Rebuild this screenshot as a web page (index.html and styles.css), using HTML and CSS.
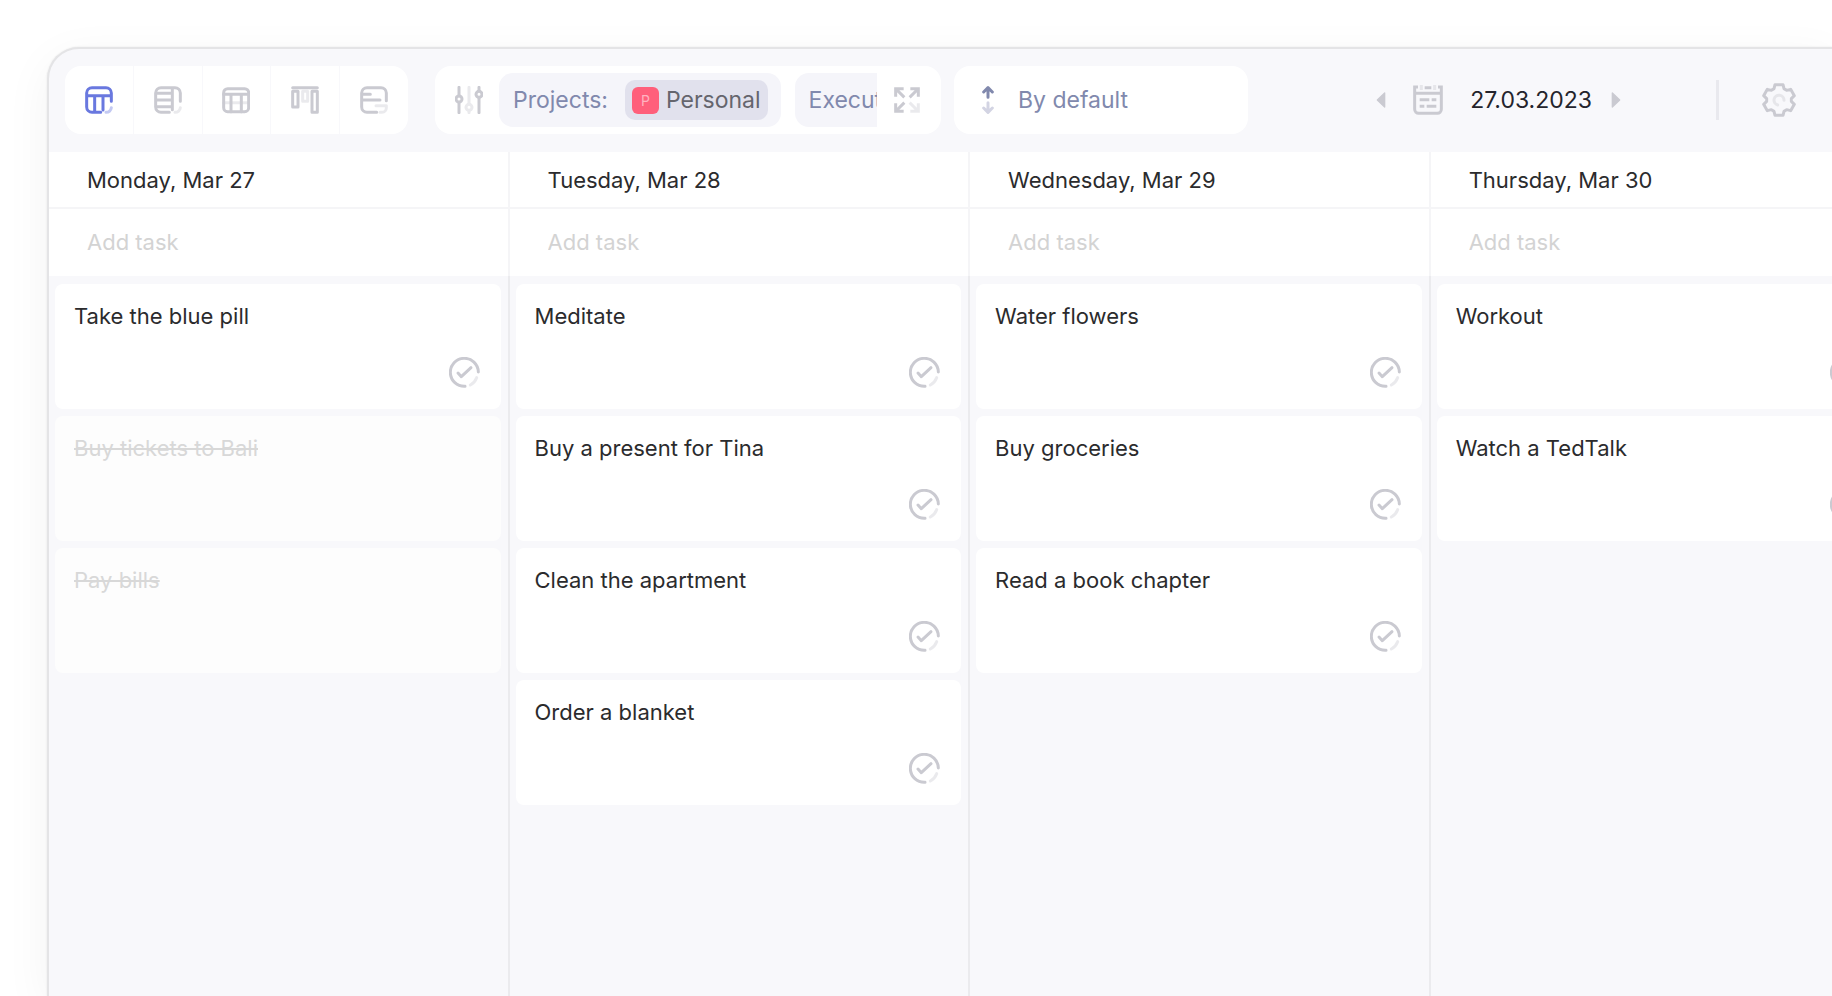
FILE: index.html
```html
<!DOCTYPE html>
<html lang="en">
<head>
  <meta charset="UTF-8" />
  <meta name="viewport" content="width=device-width, initial-scale=1.0">
  <title>Week planner</title>
  <link rel="stylesheet" href="styles.css">
</head>
<body>
  <!-- shared icons -->
  <svg class="sprite" aria-hidden="true">
    <symbol id="check" viewBox="0 0 93 93">
      <path d="M48 88A42 42 0 1 1 88 45"/>
      <path class="faint" d="M83 62A42 42 0 0 1 64 84"/>
      <path d="M27 48L37 59L66 32"/>
    </symbol>
  </svg>

  <main class="app">
    <header class="toolbar">
      <nav class="views">
        <button class="view active" aria-label="Week">
          <svg width="28" height="28" viewBox="0 0 84 84">
            <path d="M47 79H21A16 16 0 0 1 5 63V21A16 16 0 0 1 21 5H63A16 16 0 0 1 79 21V46M5 29H79M29 29V79M54 29V72"/>
            <path class="faint" d="M63 79A17 17 0 0 0 79 65"/>
          </svg>
        </button>
        <button class="view" aria-label="List">
          <svg width="28" height="28" viewBox="0 0 84 84">
            <path d="M46 79H21A16 16 0 0 1 5 63V21A16 16 0 0 1 21 5H63A16 16 0 0 1 79 21V46M55 5V71M5 22H55M5 42H55M5 62H55"/>
            <path class="faint" d="M63 79A17 17 0 0 0 79 65"/>
          </svg>
        </button>
        <button class="view" aria-label="Table">
          <svg width="28" height="28" viewBox="0 0 84 84">
            <path class="faint" d="M5 50H79"/>
            <rect x="5" y="8" width="75" height="69" rx="12"/>
            <path d="M5 25H80M27 25V77M58 25V77"/>
          </svg>
        </button>
        <button class="view" aria-label="Board">
          <svg width="28" height="28" viewBox="0 0 84 84">
            <path d="M5 5H79M5 16H21V63H5ZM63 16H79V79H63Z"/>
            <path class="faint" d="M35 16H50V46H35Z"/>
          </svg>
        </button>
        <button class="view" aria-label="Timeline">
          <svg width="28" height="28" viewBox="0 0 84 84">
            <path d="M50 79H21A16 16 0 0 1 5 63V21A16 16 0 0 1 21 5H63A16 16 0 0 1 79 21V44M5 25H31M5 42H60"/>
            <path class="faint" d="M48 59H79V66A13 13 0 0 1 66 79H60"/>
          </svg>
        </button>
      </nav>

      <section class="filters">
        <button class="icon-btn" aria-label="Filters">
          <svg width="28" height="28" viewBox="0 0 84 84">
            <path d="M12 4V28M12 50V80M72 4V14M72 36V80"/>
            <circle cx="12" cy="39" r="9"/>
            <circle cx="72" cy="25" r="9"/>
            <g class="faint"><path d="M42 4V53M42 75V80"/><circle cx="42" cy="64" r="9"/></g>
          </svg>
        </button>
        <div class="chips">
          <button class="chip">Projects: <span class="tag"><span class="avatar">P</span>Personal</span></button>
          <button class="chip">Executor:</button>
        </div>
        <button class="icon-btn" aria-label="Expand">
          <svg class="sharp" width="28" height="28" viewBox="0 0 84 84">
            <path d="M34 34L9 9M8 32V8H32M50 34L75 9M52 8H76V32M34 50L9 75M8 52V76H32"/>
            <path class="faint" d="M50 50L75 75M76 52V76H52"/>
          </svg>
        </button>
      </section>

      <button class="sort">
        <svg width="12" height="28" viewBox="0 0 36 84">
          <path d="M18 34V7M5 18L18 5L31 18"/>
          <path class="soft" d="M18 50V77M5 66L18 79L31 66"/>
        </svg>
        By default
      </button>

      <div class="dates">
        <button aria-label="Previous day">
          <svg width="10" height="16" viewBox="0 0 30 48"><path class="solid" d="M26 3V45L4 24Z"/></svg>
        </button>
        <button class="date">
          <svg class="sharp" width="30" height="30" viewBox="0 0 90 90">
            <path d="M15 6H5V73A12 12 0 0 0 17 85H73A12 12 0 0 0 85 73V6H75M35 8H55M5 25H85M20 44H49M56 44H70M20 64H34M41 64H70"/>
            <path class="faint" d="M25 0V15M65 0V15"/>
          </svg>
          27.03.2023
        </button>
        <button aria-label="Next day">
          <svg width="10" height="16" viewBox="0 0 30 48"><path class="solid" d="M4 3V45L26 24Z"/></svg>
        </button>
      </div>

      <button class="settings" aria-label="Settings">
        <svg width="34" height="34" viewBox="0 0 102 102">
          <path d="M39 5H63L66 17L74 22L86 19L97 38L88 47V55L97 64L86 83L74 80L66 85L63 97H39L36 85L28 80L16 83L5 64L14 55V47L5 38L16 19L28 22L36 17Z"/>
          <path class="faint" d="M47 66A15 15 0 1 1 66 52"/>
        </svg>
      </button>
    </header>

    <div class="board">
      <section class="day">
        <h2>Monday, Mar 27</h2>
        <input class="add" type="text" placeholder="Add task" aria-label="Add task for Monday">
        <ul class="tasks">
          <li class="task">Take the blue pill <button class="check" aria-label="Complete"><svg width="31" height="31"><use href="#check"/></svg></button></li>
          <li class="task done"><s>Buy tickets to Bali</s></li>
          <li class="task done"><s>Pay bills</s></li>
        </ul>
      </section>
      <section class="day">
        <h2>Tuesday, Mar 28</h2>
        <input class="add" type="text" placeholder="Add task" aria-label="Add task for Tuesday">
        <ul class="tasks">
          <li class="task">Meditate <button class="check" aria-label="Complete"><svg width="31" height="31"><use href="#check"/></svg></button></li>
          <li class="task">Buy a present for Tina <button class="check" aria-label="Complete"><svg width="31" height="31"><use href="#check"/></svg></button></li>
          <li class="task">Clean the apartment <button class="check" aria-label="Complete"><svg width="31" height="31"><use href="#check"/></svg></button></li>
          <li class="task">Order a blanket <button class="check" aria-label="Complete"><svg width="31" height="31"><use href="#check"/></svg></button></li>
        </ul>
      </section>
      <section class="day">
        <h2>Wednesday, Mar 29</h2>
        <input class="add" type="text" placeholder="Add task" aria-label="Add task for Wednesday">
        <ul class="tasks">
          <li class="task">Water flowers <button class="check" aria-label="Complete"><svg width="31" height="31"><use href="#check"/></svg></button></li>
          <li class="task">Buy groceries <button class="check" aria-label="Complete"><svg width="31" height="31"><use href="#check"/></svg></button></li>
          <li class="task">Read a book chapter <button class="check" aria-label="Complete"><svg width="31" height="31"><use href="#check"/></svg></button></li>
        </ul>
      </section>
      <section class="day">
        <h2>Thursday, Mar 30</h2>
        <input class="add" type="text" placeholder="Add task" aria-label="Add task for Thursday">
        <ul class="tasks">
          <li class="task">Workout <button class="check" aria-label="Complete"><svg width="31" height="31"><use href="#check"/></svg></button></li>
          <li class="task">Watch a TedTalk <button class="check" aria-label="Complete"><svg width="31" height="31"><use href="#check"/></svg></button></li>
        </ul>
      </section>
    </div>
  </main>
</body>
</html>
```

FILE: styles.css
```css
* { margin: 0; padding: 0; box-sizing: border-box; }
body {
  display: flex;
  min-height: 100vh;
  padding: 47px 0 0 47px;
  overflow: hidden;
  background: #fff;
  color: #2b2b2d;
  font-family: Inter, "Liberation Sans", sans-serif;
  font-size: 22px;
  line-height: 28px;
}
button {
  border: 0;
  background: none;
  color: inherit;
  font: inherit;
  cursor: pointer;
}
svg {
  display: block;
  flex: none;
  fill: none;
  stroke: #cacad1;
  stroke-width: 9;
  stroke-linecap: round;
  stroke-linejoin: round;
}
.sprite { position: absolute; width: 0; height: 0; }
.sharp { stroke-linecap: butt; stroke-linejoin: miter; }
.faint { opacity: 0.4; }
.solid { fill: #cacad1; stroke-width: 4; }

.app {
  display: flex;
  flex-direction: column;
  flex: 1;
  min-width: 0;
  border: 2px solid #e4e4e6;
  border-right: 0;
  border-bottom: 0;
  border-radius: 32px 0 0 0;
  background: #f8f8fb;
  box-shadow: 0 0 2px rgba(0, 0, 0, 0.1), 0 12px 48px rgba(0, 0, 0, 0.05);
  overflow: hidden;
}

/* toolbar */
.toolbar {
  display: flex;
  align-items: center;
  height: 103px;
  padding: 0 36px 1px 16px;
}
.views {
  display: flex;
  gap: 1px;
  width: 343px;
  margin-right: 27px;
  border-radius: 16px;
  overflow: hidden;
}
.view {
  display: grid;
  place-items: center;
  flex: 1;
  height: 68px;
  background: #fff;
}
.active svg { stroke: #6978df; }
.filters, .sort {
  display: flex;
  align-items: center;
  height: 68px;
  margin-right: 13px;
  border-radius: 16px;
  background: #fff;
}
.filters {
  width: 506px;
  color: #8189ad;
  font-size: 23px;
}
.icon-btn {
  display: grid;
  place-items: center;
  flex: none;
  width: 64px;
  height: 68px;
}
.icon-btn:first-child { padding-left: 3px; }
.icon-btn:last-child { padding-right: 4px; }
.chips {
  display: flex;
  flex: 1;
  gap: 14px;
  overflow: hidden;
}
.chip {
  display: flex;
  align-items: center;
  flex: none;
  gap: 17px;
  height: 54px;
  padding: 0 13px 0 14px;
  border-radius: 14px;
  background: #f5f5fa;
}
.tag {
  display: flex;
  align-items: center;
  gap: 7px;
  height: 40px;
  padding: 0 7px;
  border-radius: 10px;
  background: #e1e1ed;
  color: #65656d;
}
.avatar {
  display: grid;
  place-items: center;
  width: 27px;
  height: 27px;
  border-radius: 6px;
  background: #ff5f7b;
  color: #ffb3c0;
  font-size: 14px;
}
.sort {
  gap: 24px;
  width: 294px;
  padding: 0 28px;
  color: #8189ad;
  font-size: 23px;
}
.sort svg { stroke: #8189ad; }
.sort .soft { stroke: #d3d4e3; }
.dates {
  display: flex;
  align-items: center;
  gap: 19px;
  margin-left: auto;
  color: #24242c;
  font-size: 23px;
}
.date {
  display: flex;
  align-items: center;
  gap: 27px;
  padding-left: 8px;
}
.settings {
  display: flex;
  align-items: center;
  height: 40px;
  margin-left: 95px;
  padding-left: 43px;
  border-left: 3px solid #e9e9ee;
}

/* week board */
.board {
  display: grid;
  grid-template-columns: repeat(4, 25.83%);
  flex: 1;
}
.day {
  display: flex;
  flex-direction: column;
}
.day h2 {
  height: 57px;
  padding: 14px 38px;
  border-right: 2px solid #f5f5f7;
  border-bottom: 2px solid #f5f5f7;
  background: #fff;
  font-size: 22px;
  font-weight: 400;
}
.add {
  width: 100%;
  height: 67px;
  padding: 0 38px 2px;
  border: 0;
  border-right: 2px solid #f5f5f7;
  background: #fff;
  font: inherit;
}
.add::placeholder { color: #d3d3d3; opacity: 1; }
.tasks {
  display: flex;
  flex-direction: column;
  flex: 1;
  gap: 7px;
  padding: 8px 7px 8px 6px;
  border-right: 2px solid #ebebee;
  list-style: none;
}
.task {
  display: flex;
  justify-content: space-between;
  height: 125px;
  padding: 18px 21px 21px 19px;
  border-radius: 8px;
  background: #fff;
}
.check { align-self: flex-end; }
.done {
  background: #fdfdfd;
  color: #d8d8d8;
}
.done s { text-decoration-thickness: 2px; }
```
